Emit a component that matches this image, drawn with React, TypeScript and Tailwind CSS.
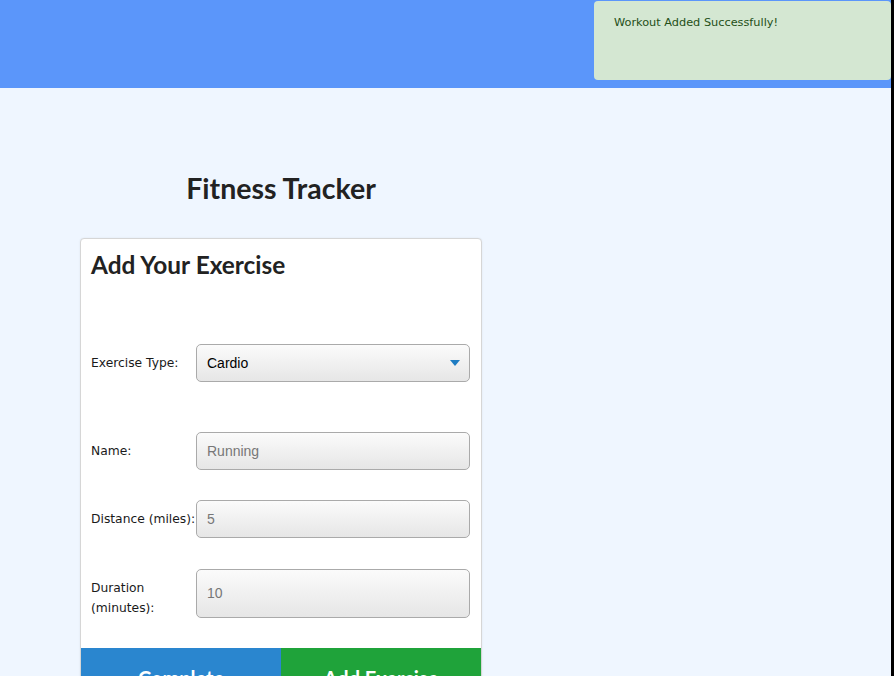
import React from "react";

const labelFont = { fontFamily: '"DejaVu Sans", Verdana, sans-serif' };

const inputClass =
  "w-full rounded-[5px] border border-[#aaaaaa] bg-gradient-to-b from-[#fbfbfb] to-[#e6e6e6] px-[10px] text-[14px] text-black placeholder:text-[#777777] outline-none font-['Liberation_Sans',Arial,sans-serif]";

const Field: React.FC<{
  label: React.ReactNode;
  placeholder: string;
  tall?: boolean;
  className?: string;
}> = ({ label, placeholder, tall, className = "" }) => (
  <div className={`grid grid-cols-[105px_1fr] items-center ${className}`}>
    <label
      className={`text-[12.3px] leading-[20px] text-[#1a1a1a] ${tall ? "pt-[10px]" : ""}`}
      style={labelFont}
    >
      {label}
    </label>
    <input className={`${inputClass} ${tall ? "h-[49px]" : "h-[38px]"}`} placeholder={placeholder} />
  </div>
);

export default function App() {
  return (
    <div className="flex min-h-[676px] bg-black font-['Lato',sans-serif]">
      <div className="relative flex-1 bg-[#eff6ff]">
        {/* Header */}
        <header className="h-[88px] bg-[#5b96fa]" />

        {/* Toast */}
        <div
          className="absolute right-0 top-[1px] h-[79px] w-[297px] rounded-[4px] bg-[#d4e7d2] px-[20px] pt-[14px] text-[11.3px] text-[#244f17]"
          style={labelFont}
        >
          Workout Added Successfully!
        </div>

        {/* Main */}
        <main className="ml-[80px] w-[402px] pt-[83px]">
          <h1 className="text-center text-[28.5px] font-bold leading-[34px] text-[#222222]">
            Fitness Tracker
          </h1>

          <div className="mt-[33px] overflow-hidden rounded-[4px] border border-[#d6d6d6] bg-white shadow-[0_0_2px_rgba(0,0,0,0.08)]">
            <div className="px-[10px] pr-[11px]">
              <h2 className="pt-[11px] text-[24.4px] font-bold leading-[29px] text-[#222222]">
                Add Your Exercise
              </h2>

              <div className="mt-[65px] grid grid-cols-[105px_1fr] items-center">
                <label className="text-[12.3px] text-[#1a1a1a]" style={labelFont}>
                  Exercise Type:
                </label>
                <div className="relative">
                  <select
                    className={`${inputClass} h-[38px] appearance-none`}
                    defaultValue="Cardio"
                  >
                    <option>Cardio</option>
                    <option>Resistance</option>
                  </select>
                  <svg
                    className="pointer-events-none absolute right-[10px] top-[16px]"
                    width="10"
                    height="6"
                    viewBox="0 0 10 6"
                  >
                    <path d="M0 0h10L5 6z" fill="#1e7cc2" />
                  </svg>
                </div>
              </div>

              <div className="flex flex-col pb-[30px]">
                <Field className="mt-[50px]" label="Name:" placeholder="Running" />
                <Field className="mt-[30px]" label="Distance (miles):" placeholder="5" />
                <Field
                  className="mt-[30px]"
                  label={
                    <>
                      Duration
                      <br />
                      (minutes):
                    </>
                  }
                  placeholder="10"
                  tall
                />
              </div>
            </div>

            <div className="flex">
              <button className="h-[60px] flex-1 bg-[#2a86cf] text-[20px] font-bold text-white">
                Complete
              </button>
              <button className="h-[60px] flex-1 bg-[#1fa33a] text-[20px] font-bold text-white">
                Add Exercise
              </button>
            </div>
          </div>
        </main>
      </div>
      <div className="w-[3px] shrink-0 bg-black" />
    </div>
  );
}
